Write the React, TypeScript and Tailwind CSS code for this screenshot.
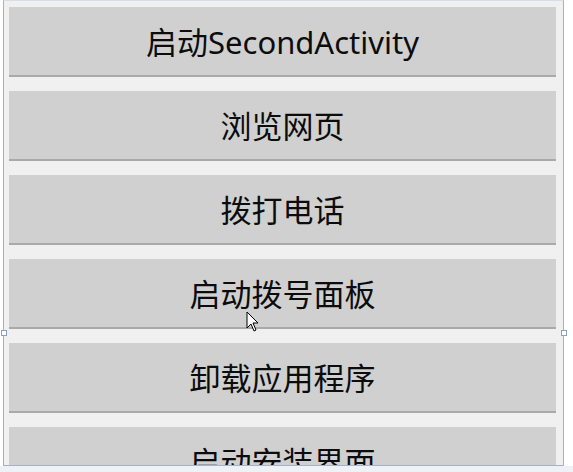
import React from 'react'

const items = ['启动SecondActivity', '浏览网页', '拨打电话', '启动拨号面板', '卸载应用程序', '启动安装界面']

export default function App() {
    return (
        <div className="relative h-[472px] w-[573px] overflow-hidden bg-white" style={{ fontFamily: '"Noto Sans", "Noto Sans CJK SC", sans-serif' }}>
            {/* device frame */}
            <div className="ml-[3px] h-[466px] w-[561px] overflow-hidden border-x border-t border-b border-x-[#a3b2c9] border-t-[#d5deea] border-b-[#a3b2c9] bg-[#f0f0f0] pl-[5px] pr-[7px] pt-[6px]">
                <div className="flex flex-col gap-[14px]">
                    {items.map((label) => (
                        <button
                            key={label}
                            type="button"
                            className="flex h-[70px] w-full shrink-0 items-center justify-center border-b-2 border-[#a9a9a9] bg-[#d0d0d0] pt-[2px] text-[31px] leading-none text-[#0c0c0c]"
                        >
                            {label}
                        </button>
                    ))}
                </div>
            </div>
            <div className="h-[6px] bg-[#eef1f5]" />

            {/* selection handles */}
            <div className="absolute left-[1px] top-[330px] h-[6px] w-[6px] border border-[#8aa0bf] bg-white" />
            <div className="absolute left-[561px] top-[330px] h-[6px] w-[6px] border border-[#8aa0bf] bg-white" />

            {/* mouse cursor */}
            <svg className="absolute left-[246px] top-[311px]" width="14" height="22" viewBox="0 0 14 22">
                <path d="M1 1 L1 17 L5 13 L8 20 L10 19 L7 12 L12 12 Z" fill="white" stroke="black" strokeWidth="1" />
            </svg>
        </div>
    )
}
